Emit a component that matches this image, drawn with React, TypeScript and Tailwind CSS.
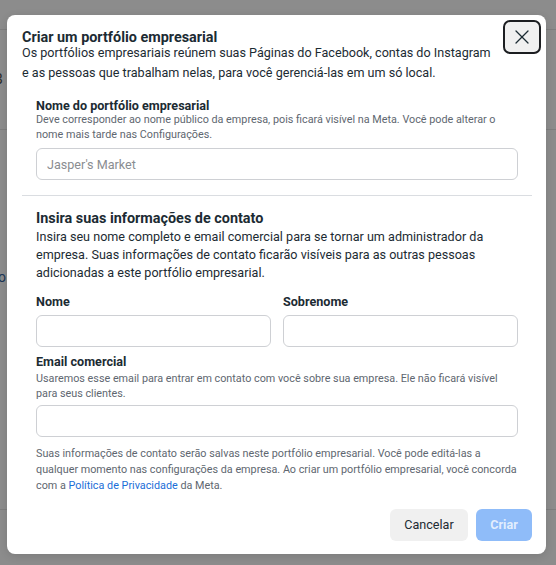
import { X } from "lucide-react";

function Field({ placeholder }: { placeholder?: string }) {
  return (
    <input
      placeholder={placeholder}
      className="h-[32px] w-full rounded-[6px] border border-[#ced0d4] bg-white px-[10px] text-[12.6px] text-[#1c2b33] outline-none placeholder:text-[#8a8d91]"
    />
  );
}

function Backdrop() {
  return (
    <div className="flex h-full flex-col">
      <div className="h-[30px] border-b border-[#7e7e7e]" />
      <div className="flex h-[100px] items-center border-b border-[#7e7e7e]">
        <span className="-ml-[6px] text-[14px] text-[#2a2a2a]">B</span>
      </div>
      <div className="flex h-[158px] items-end">
        <span className="-ml-[2px] text-[14px] text-[#1b3556]">o</span>
      </div>
      <div className="h-[222px] border-b border-[#7e7e7e]" />
    </div>
  );
}

export default function App() {
  return (
    <div className="relative h-[565px] w-[556px] overflow-hidden bg-[#8c8c8c] font-['Roboto',sans-serif] text-[#1c2b33]">
      <Backdrop />

      <div className="absolute left-[7px] top-[15px] flex h-[539px] w-[539px] flex-col rounded-[8px] bg-white pb-[13px] pl-[15px] pr-[14px] pt-[14px] shadow-[0_2px_8px_rgba(0,0,0,0.12)]">
        <button className="absolute right-[5px] top-[5px] flex h-[34px] w-[38px] items-center justify-center rounded-[7px] border-2 border-[#1c1e21] bg-[#f0f0f0]">
          <X size={24} strokeWidth={1.3} className="text-[#1c2b33]" />
        </button>

        <div className="pr-[36px]">
          <h2 className="text-[14.4px] font-bold leading-[18px]">Criar um portfólio empresarial</h2>
          <p className="-mt-[4px] text-[12.6px] leading-5">
            Os portfólios empresariais reúnem suas Páginas do Facebook, contas do Instagram e as
            pessoas que trabalham nelas, para você gerenciá-las em um só local.
          </p>
        </div>

        <div className="mt-[16px] px-[14px]">
          <p className="text-[12.6px] font-bold leading-[14px]">Nome do portfólio empresarial</p>
          <p className="-mt-[1px] text-[10.8px] leading-[15px] text-[#606770]">
            Deve corresponder ao nome público da empresa, pois ficará visível na Meta. Você pode
            alterar o nome mais tarde nas Configurações.
          </p>
          <div className="mt-[6px]">
            <Field placeholder="Jasper's Market" />
          </div>
        </div>

        <div className="mt-[15px] border-t border-[#dadde1]" />

        <div className="mt-[14px] px-[14px]">
          <h3 className="text-[14.4px] font-bold leading-[18px]">Insira suas informações de contato</h3>
          <p className="text-[12.6px] leading-[18px]">
            Insira seu nome completo e email comercial para se tornar um administrador da empresa.
            Suas informações de contato ficarão visíveis para as outras pessoas adicionadas a este
            portfólio empresarial.
          </p>

          <div className="mt-[13px] grid grid-cols-2 gap-x-3">
            <div>
              <p className="text-[12.6px] font-bold leading-[14px]">Nome</p>
              <div className="mt-[6px]">
                <Field />
              </div>
            </div>
            <div>
              <p className="text-[12.6px] font-bold leading-[14px]">Sobrenome</p>
              <div className="mt-[6px]">
                <Field />
              </div>
            </div>
          </div>

          <p className="mt-[8px] text-[12.6px] font-bold leading-[14px]">Email comercial</p>
          <p className="mt-[2px] whitespace-nowrap text-[10.8px] leading-[15px] text-[#606770]">
            Usaremos esse email para entrar em contato com você sobre sua empresa. Ele não ficará
            visível
            <br />
            para seus clientes.
          </p>
          <div className="mt-[4px]">
            <Field />
          </div>

          <p className="mt-[9px] whitespace-nowrap text-[10.8px] leading-4 text-[#606770]">
            Suas informações de contato serão salvas neste portfólio empresarial. Você pode editá-las a
            <br />
            qualquer momento nas configurações da empresa. Ao criar um portfólio empresarial, você
            concorda
            <br />
            com a <span className="text-[#1a6ed8]">Política de Privacidade</span> da Meta.
          </p>
        </div>

        <div className="mt-auto flex justify-end gap-2">
          <button className="h-[32px] w-[78px] rounded-[6px] bg-[#f0f0f0] text-[12.6px] text-[#1c2b33]">
            Cancelar
          </button>
          <button className="h-[32px] w-[56px] rounded-[6px] bg-[#8fbcf9] text-[12.6px] font-bold text-white/75">
            Criar
          </button>
        </div>
      </div>
    </div>
  );
}
